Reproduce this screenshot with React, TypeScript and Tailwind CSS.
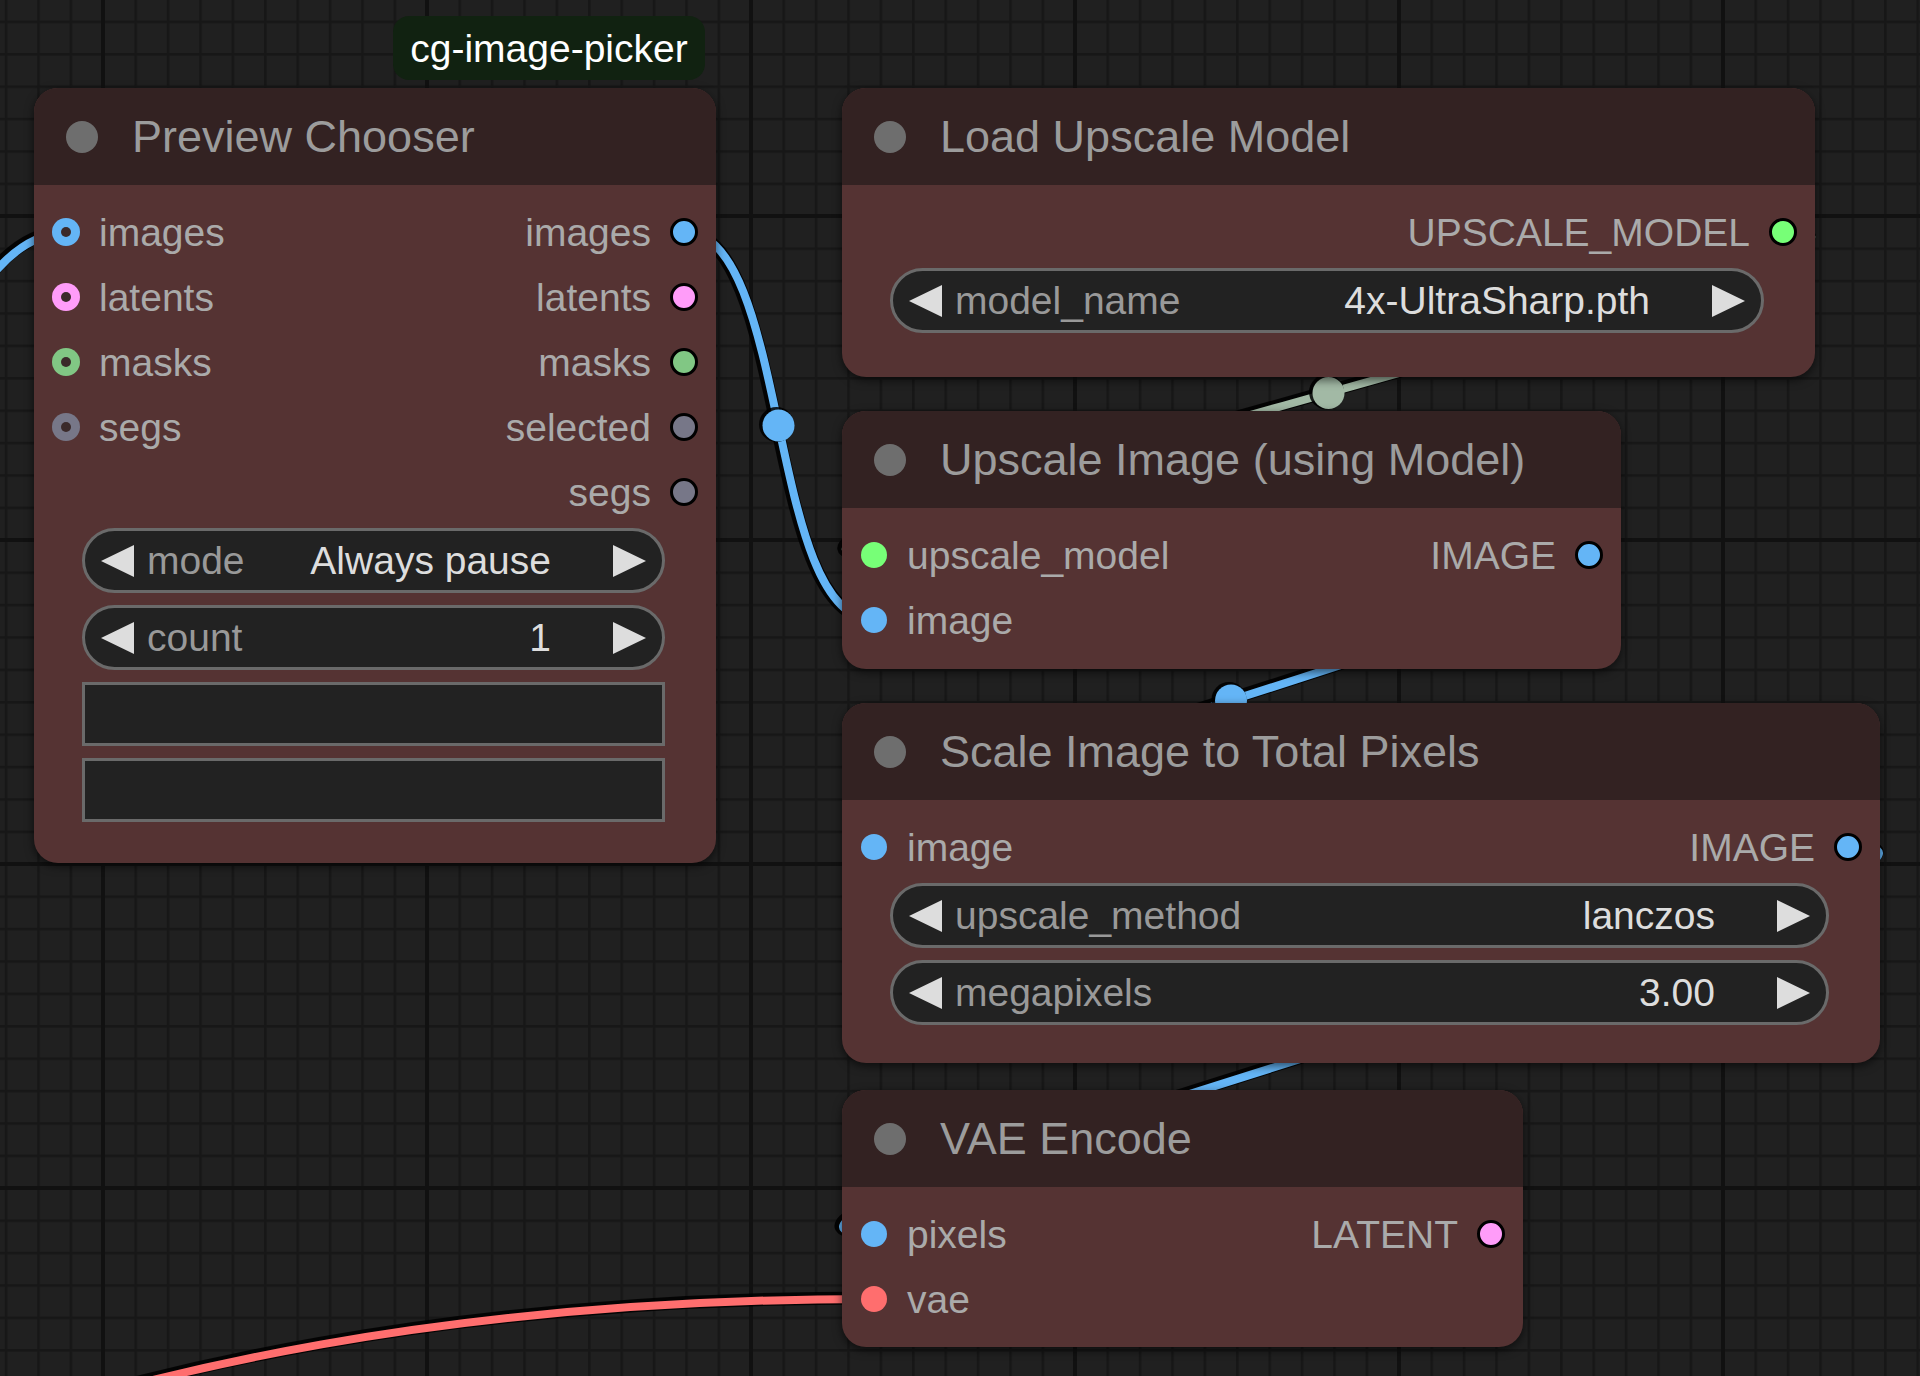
import React from 'react'

type Kind = 'in' | 'hollow' | 'out'

interface SlotDef {
  label: string
  color: string
  kind: Kind
}

interface WidgetDef {
  label?: string
  value?: string
  box?: boolean
}

// slot colours, written out in full so tailwind picks them up
const C = {
  image: 'bg-[#64b5f6]',
  latent: 'bg-[#ff9cf9]',
  mask: 'bg-[#81c784]',
  grey: 'bg-[#777788]',
  green: 'bg-[#77ff77]',
  vae: 'bg-[#ff6e6e]',
}

function Dot({ color, kind }: { color: string; kind: Kind }) {
  if (kind === 'out') {
    return <span className={`w-[28px] h-[28px] shrink-0 rounded-full border-[3px] border-black ${color}`} />
  }
  if (kind === 'hollow') {
    return (
      <span className={`w-[28px] h-[28px] shrink-0 rounded-full flex items-center justify-center ${color}`}>
        <span className="w-[10px] h-[10px] rounded-full bg-[#3b2a2a]" />
      </span>
    )
  }
  return (
    <span className="w-[28px] h-[28px] shrink-0 flex items-center justify-center">
      <span className={`w-[26px] h-[26px] rounded-full ${color}`} />
    </span>
  )
}

function Row({ input, output }: { input?: SlotDef; output?: SlotDef }) {
  return (
    <div className="h-[65px] flex items-center justify-between px-[18px] text-[39px] leading-none text-[#aaaaaa]">
      <div className="flex items-center gap-[19px] pt-[3px]">
        {input && (
          <>
            <Dot color={input.color} kind={input.kind} />
            <span>{input.label}</span>
          </>
        )}
      </div>
      <div className="flex items-center gap-[19px] pt-[3px]">
        {output && (
          <>
            <span>{output.label}</span>
            <Dot color={output.color} kind={output.kind} />
          </>
        )}
      </div>
    </div>
  )
}

function Arrow({ dir }: { dir: 'left' | 'right' }) {
  return (
    <svg width="33" height="32" viewBox="0 0 33 32" className="shrink-0">
      {dir === 'left' ? (
        <polygon points="33,0 0,16 33,32" fill="#dddddd" />
      ) : (
        <polygon points="0,0 33,16 0,32" fill="#dddddd" />
      )}
    </svg>
  )
}

function Widget({ w }: { w: WidgetDef }) {
  if (w.box) {
    return <div className="h-[64px] border-[3px] border-[#6a6a6a] bg-[#222222]" />
  }
  return (
    <div className="h-[65px] rounded-full border-[3px] border-[#6a6a6a] bg-[#222222] flex items-center px-[16px] text-[39px] leading-none">
      <Arrow dir="left" />
      <span className="ml-[13px] text-[#999999]">{w.label}</span>
      <span className="ml-auto mr-[62px] text-[#dddddd]">{w.value}</span>
      <Arrow dir="right" />
    </div>
  )
}

function Node({
  pos,
  title,
  rows,
  widgets = [],
}: {
  pos: string
  title: string
  rows: { input?: SlotDef; output?: SlotDef }[]
  widgets?: WidgetDef[]
}) {
  return (
    <div className={`absolute ${pos} rounded-[24px] overflow-hidden bg-[#553333] shadow-[0_3px_10px_rgba(0,0,0,0.6)] flex flex-col`}>
      <div className="h-[97px] shrink-0 bg-[#332222] flex items-center pl-[32px]">
        <span className="w-[32px] h-[32px] rounded-full bg-[#6e6e6e]" />
        <span className="ml-[34px] text-[45px] leading-none text-[#9c9c9c]">{title}</span>
      </div>
      <div className="pt-[13px]">
        {rows.map((r, i) => (
          <Row key={i} input={r.input} output={r.output} />
        ))}
      </div>
      {widgets.length > 0 && (
        <div className="mt-[5px] pl-[48px] pr-[51px] flex flex-col gap-[12px]">
          {widgets.map((w, i) => (
            <Widget key={i} w={w} />
          ))}
        </div>
      )}
    </div>
  )
}

// litegraph style spline: control points pushed out by a quarter of the distance
function spline(x1: number, y1: number, x2: number, y2: number) {
  const d = Math.hypot(x2 - x1, y2 - y1) * 0.25
  return {
    d: `M${x1} ${y1} C${x1 + d} ${y1} ${x2 - d} ${y2} ${x2} ${y2}`,
    mid: [(x1 + x2) / 2, (y1 + y2) / 2] as [number, number],
  }
}

function Link({ d, color, mid }: { d: string; color: string; mid?: [number, number] }) {
  return (
    <g>
      <path d={d} fill="none" stroke="#000" strokeOpacity="0.85" strokeWidth="13" transform="translate(-2 -1)" />
      <path d={d} fill="none" stroke={color} strokeWidth="8" />
      {mid && (
        <>
          <circle cx={mid[0] - 2} cy={mid[1] - 1} r="17.5" fill="#000" fillOpacity="0.85" />
          <circle cx={mid[0]} cy={mid[1]} r="16" fill={color} />
        </>
      )}
    </g>
  )
}

function Canvas() {
  const l1 = spline(683, 231, 874, 620)
  const l2 = spline(1783, 231, 874, 555)
  const l3 = spline(1588, 555, 874, 846)
  const l4 = spline(1848, 846, 874, 1234)
  return (
    <svg className="absolute inset-0" width="1920" height="1376" viewBox="0 0 1920 1376">
      <defs>
        <pattern id="minor" patternUnits="userSpaceOnUse" x="4.8" y="20.6" width="32.4" height="32.4">
          <rect x="0" y="0" width="2.6" height="32.4" fill="#171717" />
          <rect x="0" y="0" width="32.4" height="2.6" fill="#171717" />
        </pattern>
        <pattern id="major" patternUnits="userSpaceOnUse" x="101" y="214" width="324" height="324">
          <rect x="0" y="0" width="4" height="324" fill="#111111" />
          <rect x="0" y="0" width="324" height="4" fill="#111111" />
        </pattern>
      </defs>
      <rect width="1920" height="1376" fill="#202020" />
      <rect width="1920" height="1376" fill="url(#minor)" />
      <rect width="1920" height="1376" fill="url(#major)" />

      <Link d="M-80 420 C-40 300 10 233 66 233" color="#64b5f6" />
      <Link d={l1.d} mid={l1.mid} color="#64b5f6" />
      <Link d={l2.d} mid={l2.mid} color="#a2b9a5" />
      <Link d={l3.d} mid={l3.mid} color="#64b5f6" />
      <Link d={l4.d} mid={l4.mid} color="#64b5f6" />
      <Link d="M-100 1455 C150 1368 450 1299 874 1299" color="#ff6e6e" />
    </svg>
  )
}

export default function App() {
  return (
    <div className="relative w-[1920px] h-[1376px] overflow-hidden bg-[#202020] font-['Liberation_Sans',Arial,sans-serif]">
      <Canvas />

      {/* node source badge */}
      <div className="absolute left-[393px] top-[16px] w-[312px] h-[64px] rounded-[16px] bg-[#112211] flex items-center justify-center text-[39px] leading-none text-white">
        cg-image-picker
      </div>

      <Node
        pos="left-[34px] top-[88px] w-[682px] h-[775px]"
        title="Preview Chooser"
        rows={[
          { input: { label: 'images', color: C.image, kind: 'hollow' }, output: { label: 'images', color: C.image, kind: 'out' } },
          { input: { label: 'latents', color: C.latent, kind: 'hollow' }, output: { label: 'latents', color: C.latent, kind: 'out' } },
          { input: { label: 'masks', color: C.mask, kind: 'hollow' }, output: { label: 'masks', color: C.mask, kind: 'out' } },
          { input: { label: 'segs', color: C.grey, kind: 'hollow' }, output: { label: 'selected', color: C.grey, kind: 'out' } },
          { output: { label: 'segs', color: C.grey, kind: 'out' } },
        ]}
        widgets={[
          { label: 'mode', value: 'Always pause' },
          { label: 'count', value: '1' },
          { box: true },
          { box: true },
        ]}
      />

      <Node
        pos="left-[842px] top-[88px] w-[973px] h-[289px]"
        title="Load Upscale Model"
        rows={[{ output: { label: 'UPSCALE_MODEL', color: C.green, kind: 'out' } }]}
        widgets={[{ label: 'model_name', value: '4x-UltraSharp.pth' }]}
      />

      <Node
        pos="left-[842px] top-[411px] w-[779px] h-[258px]"
        title="Upscale Image (using Model)"
        rows={[
          { input: { label: 'upscale_model', color: C.green, kind: 'in' }, output: { label: 'IMAGE', color: C.image, kind: 'out' } },
          { input: { label: 'image', color: C.image, kind: 'in' } },
        ]}
      />

      <Node
        pos="left-[842px] top-[703px] w-[1038px] h-[360px]"
        title="Scale Image to Total Pixels"
        rows={[{ input: { label: 'image', color: C.image, kind: 'in' }, output: { label: 'IMAGE', color: C.image, kind: 'out' } }]}
        widgets={[
          { label: 'upscale_method', value: 'lanczos' },
          { label: 'megapixels', value: '3.00' },
        ]}
      />

      <Node
        pos="left-[842px] top-[1090px] w-[681px] h-[257px]"
        title="VAE Encode"
        rows={[
          { input: { label: 'pixels', color: C.image, kind: 'in' }, output: { label: 'LATENT', color: C.latent, kind: 'out' } },
          { input: { label: 'vae', color: C.vae, kind: 'in' } },
        ]}
      />
    </div>
  )
}
